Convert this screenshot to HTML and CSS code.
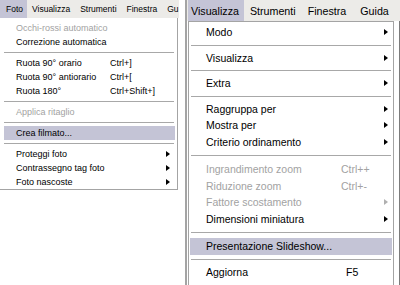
FILE: index.html
```html
<!DOCTYPE html>
<html lang="it">
<head>
    <meta charset="UTF-8">
    <title>Menu Foto e Visualizza</title>
    <link rel="stylesheet" href="styles.css">
</head>
<body>
    <div class="screen">
        <!-- Menu Foto -->
        <div class="pane pane-left">
            <div class="menubar">
                <span class="menu-title active">Foto</span>
                <span class="menu-title">Visualizza</span>
                <span class="menu-title">Strumenti</span>
                <span class="menu-title">Finestra</span>
                <span class="menu-title">Gu</span>
            </div>
            <div class="dropdown">
                <div class="item disabled"><span class="label">Occhi-rossi automatico</span></div>
                <div class="item"><span class="label">Correzione automatica</span></div>
                <div class="sep"></div>
                <div class="item"><span class="label">Ruota 90° orario</span><span class="key">Ctrl+]</span></div>
                <div class="item"><span class="label">Ruota 90° antiorario</span><span class="key">Ctrl+[</span></div>
                <div class="item"><span class="label">Ruota 180°</span><span class="key">Ctrl+Shift+]</span></div>
                <div class="sep"></div>
                <div class="item disabled"><span class="label">Applica ritaglio</span></div>
                <div class="sep"></div>
                <div class="item selected"><span class="label">Crea filmato...</span></div>
                <div class="sep"></div>
                <div class="item"><span class="label">Proteggi foto</span><span class="arrow"></span></div>
                <div class="item"><span class="label">Contrassegno tag foto</span><span class="arrow"></span></div>
                <div class="item"><span class="label">Foto nascoste</span><span class="arrow"></span></div>
            </div>
        </div>

        <!-- Menu Visualizza -->
        <div class="pane pane-right">
            <div class="menubar">
                <span class="menu-title active">Visualizza</span>
                <span class="menu-title">Strumenti</span>
                <span class="menu-title">Finestra</span>
                <span class="menu-title">Guida</span>
            </div>
            <div class="pane-body">
                <div class="dropdown">
                    <div class="item"><span class="label">Modo</span><span class="arrow"></span></div>
                    <div class="sep"></div>
                    <div class="item"><span class="label">Visualizza</span><span class="arrow"></span></div>
                    <div class="sep"></div>
                    <div class="item"><span class="label">Extra</span><span class="arrow"></span></div>
                    <div class="sep"></div>
                    <div class="item"><span class="label">Raggruppa per</span><span class="arrow"></span></div>
                    <div class="item"><span class="label">Mostra per</span><span class="arrow"></span></div>
                    <div class="item"><span class="label">Criterio ordinamento</span><span class="arrow"></span></div>
                    <div class="sep sep-wide"></div>
                    <div class="item disabled"><span class="label">Ingrandimento zoom</span><span class="key">Ctrl++</span></div>
                    <div class="item disabled"><span class="label">Riduzione zoom</span><span class="key">Ctrl+-</span></div>
                    <div class="item disabled"><span class="label">Fattore scostamento</span><span class="arrow"></span></div>
                    <div class="item"><span class="label">Dimensioni miniatura</span><span class="arrow"></span></div>
                    <div class="sep sep-wide"></div>
                    <div class="item selected"><span class="label">Presentazione Slideshow...</span></div>
                    <div class="sep"></div>
                    <div class="item"><span class="label">Aggiorna</span><span class="key key-f5">F5</span></div>
                </div>
            </div>
        </div>
    </div>
</body>
</html>
```

FILE: styles.css
```css
body {
    margin: 0;
    background: #fff;
    font-family: 'Liberation Sans', Arial, sans-serif;
    color: #000;
}

.screen {
    display: flex;
    width: 400px;
    height: 285px;
    overflow: hidden;
}

.pane {
    display: flex;
    flex-direction: column;
}

/* ---------- barra dei menu ---------- */

.menubar {
    display: flex;
    align-items: center;
    background: #ecebe8;
    white-space: nowrap;
    overflow: hidden;
}

.menu-title {
    display: flex;
    align-items: center;
    height: 100%;
}

.menu-title.active {
    background: #c4c4d6;
}

/* ---------- tendina ---------- */

.dropdown {
    background: #fff;
    display: flex;
    flex-direction: column;
}

.item {
    display: flex;
    align-items: center;
    white-space: nowrap;
}

.item.disabled {
    color: #a2a2a2;
}

.item.selected {
    background: #c4c4d6;
}

.sep {
    display: flex;
    align-items: center;
}

.sep::before {
    content: "";
    flex: 1;
    height: 1px;
    background: #a8a8a8;
}

.arrow {
    margin-left: auto;
    width: 0;
    height: 0;
    border-top: 3px solid transparent;
    border-bottom: 3px solid transparent;
    border-left: 4px solid #000;
}

.disabled .arrow {
    border-left-color: #b0b0b0;
}

/* ---------- pannello sinistro (Foto) ---------- */

.pane-left {
    width: 185px;
    font-size: 9px;
}

.pane-left .menubar {
    width: 179px;
    height: 18px;
    font-size: 8.5px;
}

.pane-left .menu-title {
    padding: 0 5px;
}

.pane-left .menu-title.active {
    padding: 0 4px 0 6px;
}

.pane-left .dropdown {
    width: 178px;
    height: 172px;
    border-right: 1px solid #a4a4a4;
    border-bottom: 1px solid #a4a4a4;
    padding-top: 3px;
    box-sizing: border-box;
}

.pane-left .item {
    height: 14px;
    margin: 0 2px 0 4px;
    padding: 0 5px 0 12px;
}

.pane-left .label {
    width: 94px;
}

.pane-left .sep {
    height: 7px;
    margin: 0 3px 0 4px;
}

/* ---------- pannello destro (Visualizza) ---------- */

.pane-right {
    flex: 1;
    border-left: 2px solid #a4a4a4;
    font-size: 10.5px;
}

.pane-right .menubar {
    height: 21px;
    padding-left: 1px;
    font-size: 10.7px;
}

.pane-right .menu-title {
    padding: 0 6px;
}

.pane-right .menu-title.active {
    padding: 0 5px 0 3px;
}

.pane-right .menu-title:last-child {
    margin-left: 2px;
}

.pane-body {
    flex: 1;
    display: flex;
    padding: 0 5px 0 1px;
    border-right: 1px solid #7c7c7c;
}

.pane-right .dropdown {
    flex: 1;
    border-left: 1px solid #a4a4a4;
    border-right: 1px solid #a4a4a4;
    border-top: 1px solid #a4a4a4;
    padding-top: 2px;
}

.pane-right .item {
    height: 16.5px;
    padding: 0 4px 0 16px;
    margin: 0 1px;
}

.pane-right .label {
    width: 135px;
}

.pane-right .sep {
    height: 9px;
    margin: 0 2px;
}

.pane-right .sep-wide {
    height: 11px;
}

.pane-right .key-f5 {
    margin-left: 5px;
}
```
